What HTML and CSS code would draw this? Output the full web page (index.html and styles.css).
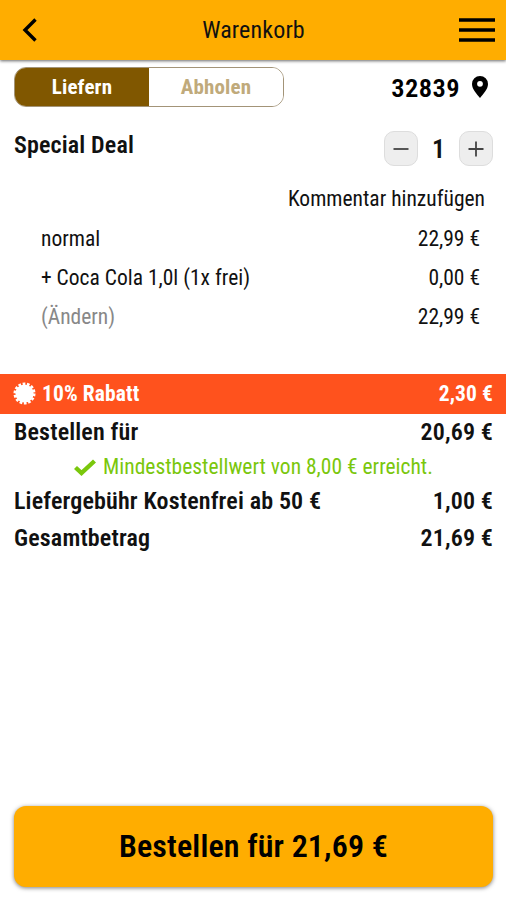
FILE: index.html
```
<!DOCTYPE html>
<html lang="de">
<head>
    <meta charset="UTF-8">
    <meta name="viewport" content="width=device-width, initial-scale=1.0">
    <title>Warenkorb</title>
    <link rel="stylesheet" href="styles.css">
</head>
<body>
    <header>
        <a href="#" class="back" aria-label="Zurück">
            <svg width="16" height="24" viewBox="0 0 16 24"><path d="M13.500 1.500L3 12l10.500 10.500" fill="none" stroke="#000" stroke-width="3.400"/></svg>
        </a>
        <h1>Warenkorb</h1>
        <a href="#" class="menu" aria-label="Menü">
            <svg width="36" height="24" viewBox="0 0 36 24"><path d="M0 2h36M0 12h36M0 22h36" stroke="#000" stroke-width="3.400"/></svg>
        </a>
    </header>
    <main>
        <div class="delivery">
            <div class="switch">
                <button class="active">Liefern</button>
                <button>Abholen</button>
            </div>
            <div class="location">
                <span>32839</span>
                <svg width="16" height="22" viewBox="0 0 16 22"><path fill-rule="evenodd" d="M8 0a8 8 0 0 0-8 8c0 5.500 5 10 8 14 3-4 8-8.500 8-14a8 8 0 0 0-8-8zm0 4.900a2.900 2.900 0 1 1 0 5.800 2.900 2.900 0 0 1 0-5.800z"/></svg>
            </div>
        </div>
        <div class="item">
            <h2>Special Deal</h2>
            <div class="amount">
                <button aria-label="Weniger"><svg width="16" height="16" viewBox="0 0 16 16"><path d="M0.500 8h15" stroke="#444" stroke-width="1.800"/></svg></button>
                <span>1</span>
                <button aria-label="Mehr"><svg width="16" height="16" viewBox="0 0 16 16"><path d="M0.500 8h15M8 0.500v15" stroke="#444" stroke-width="1.800"/></svg></button>
            </div>
        </div>
        <a href="#" class="comment">Kommentar hinzufügen</a>
        <ul class="options">
            <li><span>normal</span><span>22,99 €</span></li>
            <li><span>+ Coca Cola 1,0l (1x frei)</span><span>0,00 €</span></li>
            <li><a href="#" class="change">(Ändern)</a><span>22,99 €</span></li>
        </ul>
        <div class="discount">
            <svg width="23" height="23" viewBox="-12 -12 24 24"><circle r="9.500" fill="#fff"/><circle r="10" fill="none" stroke="#fff" stroke-width="3" stroke-dasharray="2.800 1.688"/></svg>
            <span>10% Rabatt</span>
            <span class="price">2,30 €</span>
        </div>
        <div class="sums">
            <div class="row"><span>Bestellen für</span><span>20,69 €</span></div>
            <p class="minimum">
                <svg width="22" height="17" viewBox="0 0 22 17"><path d="M1.500 8.500l6 5.500L20.500 2" fill="none" stroke="#7ac70c" stroke-width="4.400"/></svg>
                <span>Mindestbestellwert von 8,00 € erreicht.</span>
            </p>
            <div class="row"><span>Liefergebühr Kostenfrei ab 50 €</span><span>1,00 €</span></div>
            <div class="row"><span>Gesamtbetrag</span><span>21,69 €</span></div>
        </div>
    </main>
    <footer>
        <button class="order">Bestellen für 21,69 €</button>
    </footer>
</body>
</html>
```
FILE: styles.css
```
* {
    box-sizing: border-box;
}
body {
    font-family: "Roboto Condensed", Roboto, sans-serif;
    font-stretch: 75%;
    font-size: 21.5px;
    letter-spacing: 0.15px;
    color: #111;
    background-color: #fff;
    margin: 0;
    min-height: 100vh;
    display: flex;
    flex-direction: column;
}
button {
    font: inherit;
    font-stretch: inherit;
    letter-spacing: inherit;
    border: none;
    padding: 0;
    cursor: pointer;
}
a {
    color: inherit;
    text-decoration: none;
}
svg {
    display: block;
}
header {
    height: 60px;
    padding: 0 11px 0 22px;
    display: grid;
    grid-template-columns: 26px 1fr 36px;
    align-items: center;
    background-color: #ffad00;
    box-shadow: 0 1px 3px rgba(0, 0, 0, 0.6);
}
h1 {
    margin: 0;
    font-size: 24px;
    font-weight: 400;
    text-align: center;
}
main {
    flex: 1;
}
.delivery {
    display: flex;
    justify-content: space-between;
    padding: 7px 18px 0 14px;
}
.switch {
    display: flex;
    width: 270px;
    height: 40px;
    border: 1px solid #a39478;
    border-radius: 12px;
    overflow: hidden;
    font-size: 21px;
    font-weight: 700;
}
.switch button {
    flex: 1;
    background-color: #fff;
    color: #c0aa7b;
}
.switch .active {
    background-color: #805700;
    color: #fff;
}
.location {
    display: flex;
    align-items: center;
    gap: 12px;
    font-size: 26.5px;
    letter-spacing: 0.4px;
    font-weight: 600;
    color: #000;
}
.item {
    display: flex;
    justify-content: space-between;
    padding: 24px 13px 0 14px;
}
h2 {
    margin: 0;
    font-size: 24px;
    line-height: 28px;
    font-weight: 600;
}
.amount {
    display: flex;
    align-items: center;
    font-size: 26px;
    font-weight: 600;
}
.amount span {
    width: 41px;
    text-align: center;
}
.amount button {
    width: 34px;
    height: 35px;
    border: 1px solid #ddd;
    border-radius: 10px;
    background-color: #eee;
    display: flex;
    align-items: center;
    justify-content: center;
}
.comment {
    display: block;
    margin: 18px 21px 0 0;
    line-height: 30px;
    letter-spacing: 0;
    text-align: right;
}
.options {
    list-style-type: none;
    margin: 5px 0 38px;
    padding: 0 26px 0 41px;
    letter-spacing: 0;
}
.options li {
    display: flex;
    justify-content: space-between;
    line-height: 39px;
}
.change {
    color: #888;
}
.discount {
    display: flex;
    align-items: center;
    gap: 6px;
    height: 40px;
    padding: 0 13px 2px;
    background-color: #ff521d;
    color: #fff;
    font-size: 21.5px;
    letter-spacing: 0.1px;
    font-weight: 700;
}
.price {
    margin-left: auto;
}
.sums {
    padding: 0 13px 0 14px;
    font-size: 24px;
}
.row {
    display: flex;
    justify-content: space-between;
    line-height: 37px;
    font-weight: 600;
}
.minimum {
    display: flex;
    align-items: center;
    justify-content: center;
    gap: 7px;
    margin: 0;
    font-size: 21.5px;
    letter-spacing: 0;
    line-height: 32px;
    color: #7ac70c;
}
footer {
    padding: 0 13px 13px 14px;
}
.order {
    width: 100%;
    height: 81px;
    padding-bottom: 2px;
    border-radius: 12px;
    background-color: #ffad00;
    box-shadow: 0 1px 4px rgba(0, 0, 0, 0.5);
    font-size: 32px;
    font-weight: 600;
    color: #000;
}
```
